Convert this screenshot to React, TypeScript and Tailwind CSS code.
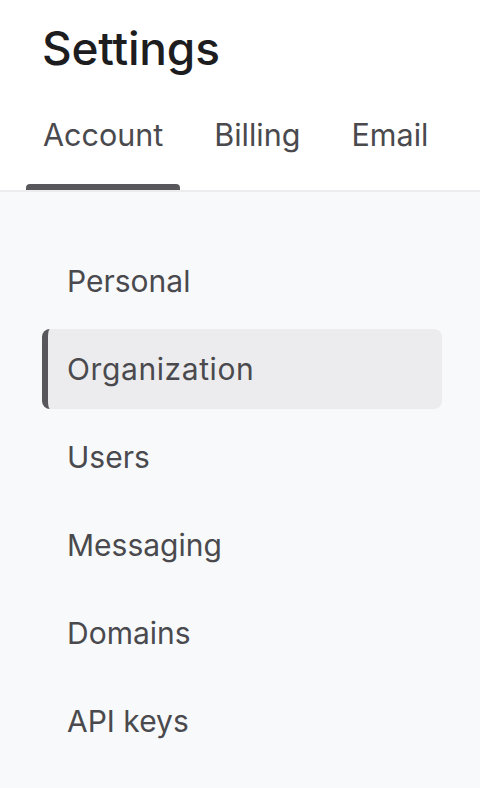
import React from "react";

const items = ["Personal", "Organization", "Users", "Messaging", "Domains", "API keys"];

export default function App() {
  return (
    <div className="w-[480px] h-[788px] flex flex-col bg-white overflow-hidden" style={{ fontFamily: "Inter, 'Noto Sans', sans-serif" }}>
      <div className="pl-[42px] pt-[22px]">
        <h1 className="text-[46px] leading-[52px] font-medium text-[#1d1d1f] tracking-[-0.2px]">Settings</h1>
      </div>
      <div className="flex border-b-2 border-[#ececee] pl-[26px] mt-[43px]">
        {["Account", "Billing", "Email"].map((t, i) => (
          <div key={t} className="flex flex-col items-center mr-[17px]">
            <div className="px-[17px] text-[30.5px] leading-[36px] text-[#4a4a4e] pb-[31px]">{t}</div>
            <div className={"h-[6px] w-full rounded-t-[4px] " + (i === 0 ? "bg-[#58585c]" : "bg-transparent")} />
          </div>
        ))}
      </div>
      <div className="flex-1 bg-[#f8f9fb] pt-[49px] pl-[42px] pr-[38px] flex flex-col gap-[8px]">
        {items.map((it, i) => (
          <div
            key={it}
            className={
              "h-[80px] flex items-center rounded-[8px] text-[30px] text-[#4a4a4e] " +
              (i === 1 ? "bg-[#ececee] border-l-[6px] border-[#58585c] pl-[19px] tracking-[0.6px]" : "pl-[25px]")
            }
          >
            {it}
          </div>
        ))}
      </div>
    </div>
  );
}
